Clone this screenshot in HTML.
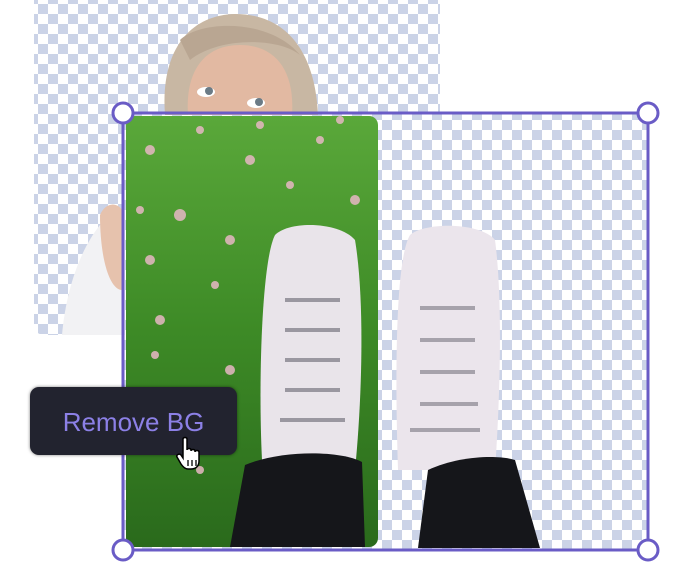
<!DOCTYPE html>
<html><head><style>
html,body{margin:0;padding:0;background:#fff;width:683px;height:585px;overflow:hidden;position:relative;font-family:"Liberation Sans",sans-serif}
.chk{position:absolute;background-color:#fff;background-image:conic-gradient(#cbd3e7 25%,#fff 0 50%,#cbd3e7 0 75%,#fff 0);background-size:20px 20px}
</style></head><body>
<div class="chk" style="left:34px;top:-10px;width:406px;height:345px;border-radius:10px;background-position:4px 4px"></div>
<div class="chk" style="left:124px;top:114px;width:523px;height:435px;background-position:-2px -4px"></div>
<svg style="position:absolute;left:0;top:0" width="683" height="585">
 <path d="M165,115 C160,50 190,15 235,14 C285,14 315,50 318,115 Z" fill="#c8b7a3"/>
 <path d="M188,115 C185,70 205,45 240,45 C275,45 295,70 292,115 Z" fill="#e2b9a2"/>
 <path d="M180,40 C200,20 270,18 300,55 C280,38 220,36 190,60 Z" fill="#b9a692"/>
 <ellipse cx="206" cy="92" rx="9" ry="5" fill="#fff"/><circle cx="209" cy="91" r="4" fill="#6b7b86"/>
 <ellipse cx="256" cy="103" rx="9" ry="5" fill="#fff"/><circle cx="259" cy="102" r="4" fill="#6b7b86"/>
 <path d="M62,335 C66,290 80,250 100,225 L125,210 L125,335 Z" fill="#f2f2f4"/>
 <path d="M100,215 C104,205 115,200 122,210 L122,290 C110,290 100,260 100,215 Z" fill="#e6c2ad"/>
 <defs>
  <linearGradient id="g" x1="0" y1="0" x2="0" y2="1"><stop offset="0" stop-color="#5aa83a"/><stop offset=".5" stop-color="#3d8a26"/><stop offset="1" stop-color="#2a6a1c"/></linearGradient>
  <clipPath id="c"><rect x="126" y="116" width="252" height="431" rx="9"/></clipPath>
 </defs>
 <g clip-path="url(#c)">
  <rect x="126" y="116" width="252" height="431" fill="url(#g)"/>
  <g fill="#e7b8c4" opacity=".85">
   <circle cx="150" cy="150" r="5"/><circle cx="200" cy="130" r="4"/><circle cx="250" cy="160" r="5"/><circle cx="320" cy="140" r="4"/><circle cx="355" cy="200" r="5"/><circle cx="180" cy="215" r="6"/><circle cx="150" cy="260" r="5"/><circle cx="230" cy="240" r="5"/><circle cx="160" cy="320" r="5"/><circle cx="215" cy="285" r="4"/><circle cx="140" cy="210" r="4"/><circle cx="290" cy="185" r="4"/><circle cx="230" cy="370" r="5"/><circle cx="155" cy="355" r="4"/><circle cx="200" cy="470" r="4"/><circle cx="340" cy="120" r="4"/><circle cx="260" cy="125" r="4"/>
  </g>
  <path d="M262,460 C258,380 262,260 275,235 C290,220 340,222 355,240 C365,300 362,400 355,470 Z" fill="#e9e4ea"/>
  <g stroke="#9a97a0" stroke-width="4"><line x1="285" y1="300" x2="340" y2="300"/><line x1="285" y1="330" x2="340" y2="330"/><line x1="285" y1="360" x2="340" y2="360"/><line x1="285" y1="390" x2="340" y2="390"/><line x1="280" y1="420" x2="345" y2="420"/></g>
  <path d="M230,547 L245,465 C280,450 340,450 362,462 L365,547 Z" fill="#15161a"/>
 </g>
 <path d="M398,470 C395,380 395,260 410,235 C425,222 480,222 495,240 C503,300 500,400 495,470 Z" fill="#ebe5ec"/>
 <g stroke="#a6a2ab" stroke-width="4"><line x1="420" y1="308" x2="475" y2="308"/><line x1="420" y1="340" x2="475" y2="340"/><line x1="420" y1="372" x2="475" y2="372"/><line x1="420" y1="404" x2="478" y2="404"/><line x1="410" y1="430" x2="480" y2="430"/></g>
 <path d="M418,548 L428,470 C460,455 500,455 515,460 L540,548 Z" fill="#15161a"/>
 <rect x="123" y="113" width="525" height="437" fill="none" stroke="#6a5cc6" stroke-width="3"/>
 <g fill="#fff" stroke="#6a5cc6" stroke-width="3">
  <circle cx="123" cy="113" r="10"/><circle cx="648" cy="113" r="10"/><circle cx="123" cy="550" r="10"/><circle cx="648" cy="550" r="10"/>
 </g>
</svg>
<div style="position:absolute;left:30px;top:387px;width:207px;height:68px;background:#22232f;border-radius:9px;box-shadow:0 0 3px rgba(0,0,0,.5);color:#8c80e6;font-size:26px;line-height:70px;text-align:center">Remove BG</div>
<svg style="position:absolute;left:174px;top:436px" width="32" height="36" viewBox="0 0 32 36">
 <path d="M9,3 C9,1 13,1 13,3 L13,14 C13,12 17,12 17,14 L17,15 C17,13 21,13 21,15 L21,16 C21,14 25,14 25,16 L25,25 C25,30 22,33 17,33 L14,33 C11,33 9,31 7,28 L3,21 C2,19 5,17 7,19 L9,22 Z" fill="#fff" stroke="#000" stroke-width="1.5"/>
 <g stroke="#000" stroke-width="1.3"><line x1="14" y1="24" x2="14" y2="30"/><line x1="18" y1="24" x2="18" y2="30"/><line x1="22" y1="24" x2="22" y2="30"/></g>
</svg>
</body></html>
